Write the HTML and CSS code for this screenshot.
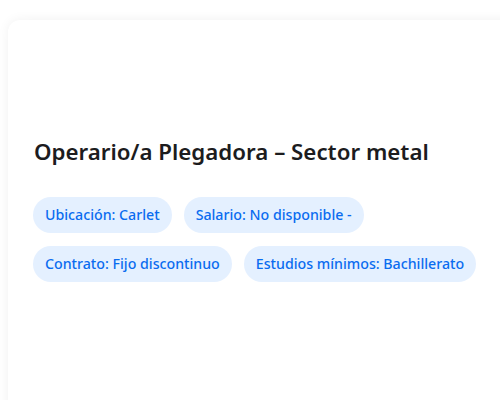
FILE: index.html
```html
<!DOCTYPE html>
<html lang="es">
<head>
<meta charset="utf-8">
<link rel="stylesheet" href="styles.css">
</head>
<body>
<div class="card">
  <h2 class="title">Operario/a Plegadora – Sector metal</h2>
  <div class="tags">
    <span class="tag">Ubicación: Carlet</span>
    <span class="tag">Salario: No disponible -</span>
    <span class="tag">Contrato: Fijo discontinuo</span>
    <span class="tag">Estudios mínimos: Bachillerato</span>
  </div>
</div>
</body>
</html>
```
FILE: styles.css
```css
html, body {
  overflow: hidden;
}
body {
  margin: 0;
  padding: 20px 0 0 8px;
  background: #ffffff;
  font-family: "Noto Sans", "Open Sans", sans-serif;
}
.card {
  width: 540px;
  min-height: 420px;
  box-sizing: border-box;
  background: #ffffff;
  border-radius: 12px;
  box-shadow: 0 0 12px rgba(0, 0, 0, 0.06);
  padding: 117px 25px 24px 25px;
}
.title {
  margin: 0 0 30px 1px;
  font-size: 22.3px;
  line-height: 30px;
  font-weight: 600;
  color: #1c1c1e;
}
.tags {
  display: flex;
  flex-wrap: wrap;
  gap: 13px 12px;
  width: 450px;
}
.tag {
  display: inline-block;
  padding: 8px 12px;
  line-height: 20px;
  font-size: 14.2px;
  font-weight: 500;
  color: #0a6cf0;
  background: #e4f0ff;
  border-radius: 18px;
}
```
